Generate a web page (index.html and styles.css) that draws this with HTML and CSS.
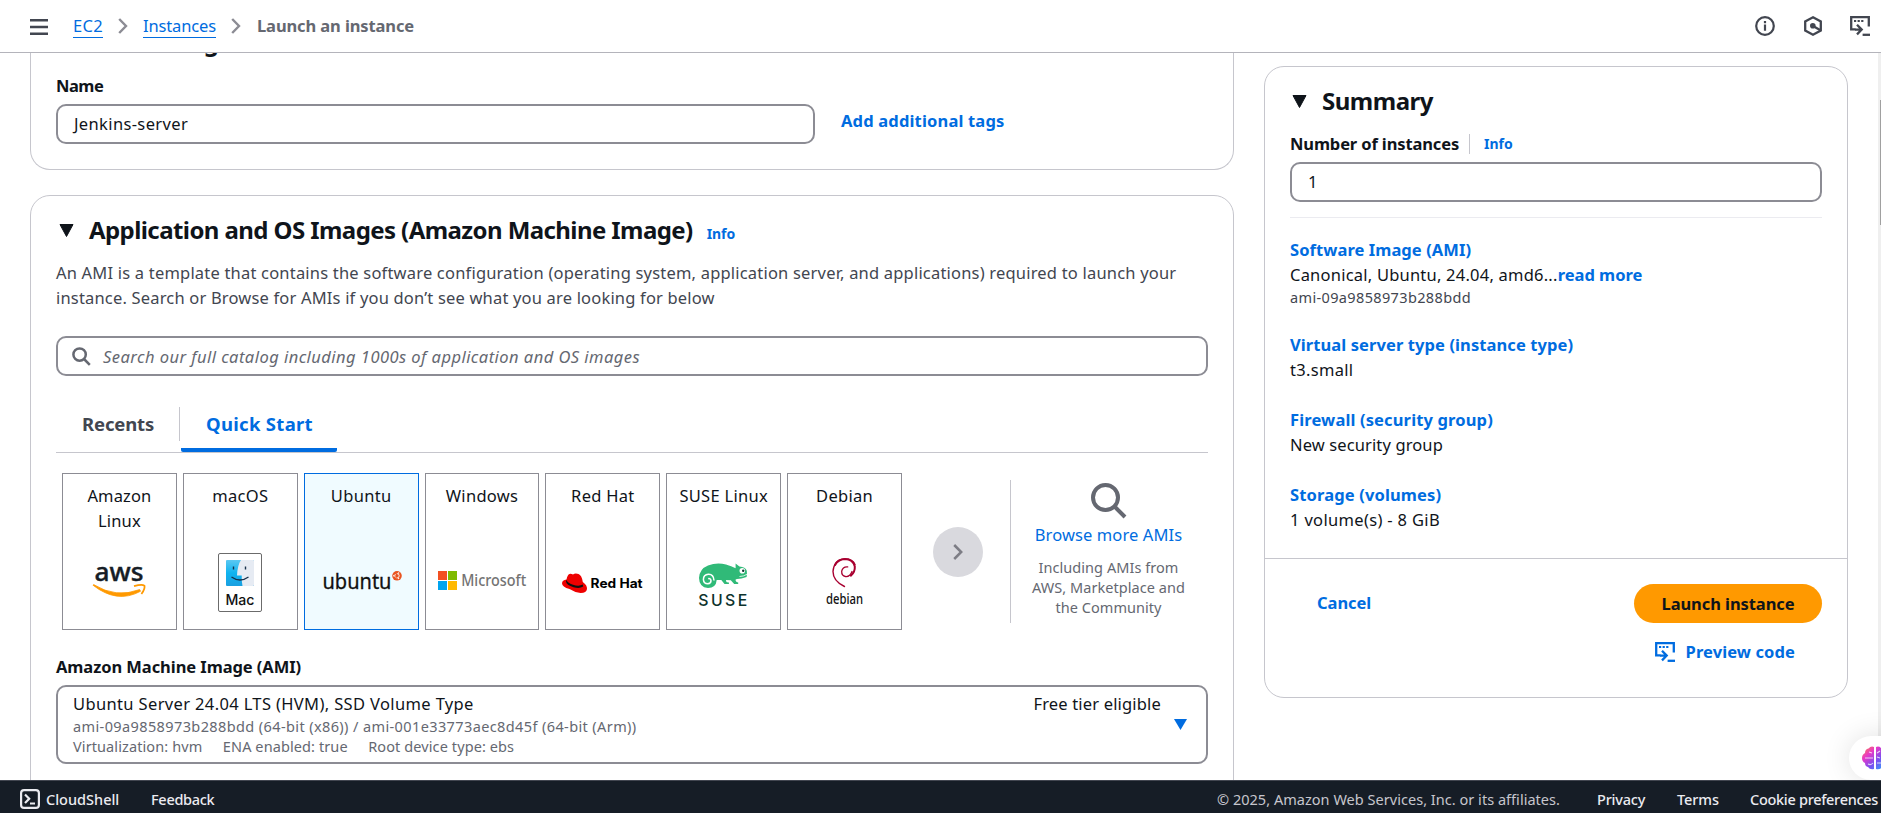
FILE: index.html
```html
<!DOCTYPE html>
<html lang="en">
<head>
<meta charset="utf-8">
<title>Launch an instance | EC2</title>
<link rel="stylesheet" href="styles.css">
</head>
<body>
<header class="topbar">
  <svg class="menu" width="18" height="16" viewBox="0 0 18 16"><path d="M0 1.2h18M0 8h18M0 14.8h18" stroke="#424650" stroke-width="2.4"/></svg>
  <nav class="crumbs">
    <a class="crumb ec2">EC2</a>
    <svg class="sep" width="10" height="16" viewBox="0 0 10 16"><path d="M1.2 1l6.8 7-6.8 7" fill="none" stroke="#8c8c94" stroke-width="2.4"/></svg>
    <a class="crumb inst">Instances</a>
    <svg class="sep" width="10" height="16" viewBox="0 0 10 16"><path d="M1.2 1l6.8 7-6.8 7" fill="none" stroke="#8c8c94" stroke-width="2.4"/></svg>
    <span class="current">Launch an instance</span>
  </nav>
  <div class="tools">
    <svg width="20" height="20" viewBox="0 0 20 20" fill="none" stroke="#424650" stroke-width="2.2"><circle cx="10" cy="10" r="8.8"/><path d="M10 8.6v6.2M10 5v2.2"/></svg>
    <svg width="20" height="20" viewBox="0 0 20 20" fill="none" stroke="#424650" stroke-width="2.3"><path d="M10 1.3l7.8 4.2v9L10 18.7l-7.8-4.2v-9z"/><circle cx="9.8" cy="9.8" r="2.8" fill="#424650" stroke="none"/><path d="M10 10l7 4"/></svg>
    <svg class="code-icon" width="20" height="20" viewBox="0 0 20 20" fill="none" stroke="#424650" stroke-width="2.3"><path d="M5.500 13.400H1.200V1.200h17.600v9.300"/><path d="M4 5h2.200M7.600 5h2.200M11.200 5h2.200" stroke-width="2"/><path d="M5 13.600h6M7 8.800l4.700 4.800L7 18.400"/><path d="M12.600 18.800H20"/></svg>
  </div>
</header>

<main class="page">
  <div class="left">
    <section class="card name-card">
      <h2 class="h2">Name and tags</h2>
      <div class="label name-label">Name</div>
      <div class="name-row">
        <div class="field name-field"><span class="jenkins">Jenkins-server</span></div>
        <a class="link-b add-tags">Add additional tags</a>
      </div>
    </section>

    <section class="card ami-card">
      <div class="head">
        <svg class="tri" width="15" height="13" viewBox="0 0 15 13"><path d="M1 .5h13L7.500 12.500z" fill="#0f141a" stroke="#0f141a" stroke-linejoin="round"/></svg>
        <h2 class="h2 app-title">Application and OS Images (Amazon Machine Image)</h2>
        <a class="info">Info</a>
      </div>
      <p class="desc"><span class="l1">An AMI is a template that contains the software configuration (operating system, application server, and applications) required to launch your</span><br><span class="l2">instance. Search or Browse for AMIs if you don’t see what you are looking for below</span></p>
      <div class="field search">
        <svg width="19" height="19" viewBox="0 0 19 19" fill="none" stroke="#656871" stroke-width="2.5"><circle cx="7.600" cy="7.600" r="6.200"/><path d="M12 12l5.800 5.800"/></svg>
        <em>Search our full catalog including 1000s of application and OS images</em>
      </div>
      <div class="tabs">
        <div class="tab recents">Recents</div>
        <div class="tab-div"></div>
        <div class="tab quick">Quick Start</div>
      </div>
      <div class="carousel">
        <div class="tiles">
          <div class="tile"><span class="t-amz">Amazon<br>Linux</span>
            <svg class="logo" viewBox="0 0 113 70"><text x="31.500" y="32.500" font-size="25" font-weight="500" textLength="49" lengthAdjust="spacingAndGlyphs" fill="#161d26" stroke="#161d26" stroke-width=".4">aws</text><path d="M30 37.200Q54 56 77.500 43.300l-.8-1.700Q53 50.500 30.600 36.600z" fill="#ff9900" stroke="#ff9900" stroke-width=".8"/><path d="M71 38.200q8-2.400 10.400-.6 1 3.400-3 8.400" fill="none" stroke="#ff9900" stroke-width="1.800"/></svg></div>
          <div class="tile"><span class="t-n">macOS</span>
            <svg class="logo" viewBox="0 0 113 70"><defs><linearGradient id="mb" x1="0" y1="0" x2="0" y2="1"><stop offset="0" stop-color="#5cc8f2"/><stop offset=".5" stop-color="#0fb4f0"/><stop offset="1" stop-color="#1a9fe0"/></linearGradient></defs><rect x="34.500" y="5.500" width="43" height="58" rx="1.500" fill="#fff" stroke="#6b6b6b"/><rect x="42" y="12" width="28" height="26" rx="1" fill="url(#mb)"/><path d="M57 12h12q1 0 1 1v24q0 1-1 1H58.500q-1-5-.8-10.500H53Q53.500 17 57 12z" fill="#e6ebf3"/><path d="M47.500 29q8.500 6 17 0" fill="none" stroke="#17304a" stroke-width="1.300"/><path d="M49.500 18.500v3M61.500 18.500v3" stroke="#17304a" stroke-width="1.400"/><text x="41.500" y="56.500" font-size="14.500" font-weight="500" font-family="Inter" textLength="29" lengthAdjust="spacingAndGlyphs" fill="#111">Mac</text></svg></div>
          <div class="tile selected"><span class="t-n">Ubuntu</span>
            <svg class="logo" viewBox="0 0 113 70"><text x="17.500" y="41" font-size="22.500" textLength="69" lengthAdjust="spacingAndGlyphs" fill="#111" stroke="#111" stroke-width=".3">ubuntu</text><circle cx="92" cy="27.800" r="4.800" fill="#e95420"/><circle cx="92" cy="27.800" r="2.200" fill="none" stroke="#fff" stroke-width=".9" stroke-dasharray="3.600 1"/><g fill="#fff"><circle cx="88.800" cy="27.800" r=".7"/><circle cx="93.600" cy="25" r=".7"/><circle cx="93.600" cy="30.600" r=".7"/></g></svg></div>
          <div class="tile"><span class="t-n">Windows</span>
            <svg class="logo" viewBox="0 0 113 70"><path fill="#f25022" d="M12 23h9v9h-9z"/><path fill="#7fba00" d="M22 23h9v9h-9z"/><path fill="#00a4ef" d="M12 33h9v9h-9z"/><path fill="#ffb900" d="M22 33h9v9h-9z"/><text x="35.200" y="38" font-size="15.500" font-weight="500" textLength="65" lengthAdjust="spacingAndGlyphs" fill="#737373">Microsoft</text></svg></div>
          <div class="tile"><span class="t-n">Red Hat</span>
            <svg class="logo" viewBox="0 0 113 70"><path d="M20.500 31.500q1-5 3-5.500 1.500-.6 3.500.6Q29 24.800 32.500 26q3.200 1 4.300 8 4.500 3.200 4.200 7-.6 4-6.500 3.900-5.500-.3-11-3.900-7.500-2-7.500-5.800.2-3 4.500-3.700z" fill="#e00"/><path d="M20.500 31.700q.6 3 6.500 5t9.800-.2l.4 2q-3.500 2.400-9.600.7-7.300-2-7.600-5.700z" fill="#111"/><text x="44.600" y="40" font-size="12.800" font-weight="700" font-family="Inter" textLength="52" lengthAdjust="spacingAndGlyphs" fill="#000">Red Hat</text></svg></div>
          <div class="tile"><span class="t-n">SUSE Linux</span>
            <svg class="logo" viewBox="0 0 113 70"><path d="M32 30Q32.500 21 41 17.600q9-3.600 18-1Q64.500 18 68.600 20.300V15.600l3.800 2.800q6 .3 7.400 4.300.4 3-.2 6.200-5.500 2-9.600 2-2 .3-1.400 1.700.6 1.800 2.600 1.900v1.500h-4l-3.400-3.800-4.600-.2q-.8.900.7 2.300l2 .3v1.400h-4.400l-3.200-4h-4.600Q49 40 41 40q-8.800-.6-9-10z" fill="#30ba78"/><path d="M47 32.500q-.4-6.400-5.600-6.200-5 .5-5 5.200.3 4.200 4.400 4.300 3.300-.2 3.200-3.200-.5-2.500-2.800-1.900" fill="none" stroke="#fff" stroke-width="1.500"/><circle cx="75.300" cy="22.800" r="2.800" fill="#fff"/><circle cx="76.200" cy="22.800" r="1.200" fill="#0c322c"/><path d="M72.500 28.500q4 0 7.500-2.200" fill="none" stroke="#fff" stroke-width=".8"/><text x="31.300" y="57.700" font-size="15.800" font-weight="500" font-family="Inter" textLength="49" fill="#0c322c">SUSE</text></svg></div>
          <div class="tile"><span class="t-n">Debian</span>
            <svg class="logo" viewBox="0 0 113 70"><g fill="none" stroke="#a80030" stroke-linecap="round"><path d="M56.500 38.500Q45 33 45 23.500 46 12 56 11q8.500-.3 11 5.500" stroke-width="1.400"/><path d="M47 17Q50.500 11 57 11q8 .2 9.800 7.500.4 5.500-4 9.200" stroke-width="2"/><path d="M64 23.500q-2 5.500-6.500 5-4-.8-3.800-5.300 1-4.700 6-4.300" stroke-width="1.300"/></g><text x="38" y="56" font-size="14.500" font-weight="500" textLength="37" lengthAdjust="spacingAndGlyphs" fill="#111">debian</text></svg></div>
        </div>
        <div class="next"><svg width="10" height="16" viewBox="0 0 10 16"><path d="M1.200 1l7 7-7 7" fill="none" stroke="#7d7d85" stroke-width="2.500"/></svg></div>
        <div class="browse">
          <svg width="36" height="36" viewBox="0 0 36 36" fill="none" stroke="#656871" stroke-width="4"><circle cx="14.500" cy="14.500" r="12.500"/><path d="M23.500 23.500L34 34"/></svg>
          <a class="browse-link">Browse more AMIs</a>
          <div class="browse-txt">Including AMIs from<br>AWS, Marketplace and<br>the Community</div>
        </div>
      </div>
      <div class="label ami-label">Amazon Machine Image (AMI)</div>
      <div class="select">
        <div class="sel-main">
          <div class="sel-row"><span class="s1">Ubuntu Server 24.04 LTS (HVM), SSD Volume Type</span><span class="free">Free tier eligible</span></div>
          <div class="sel-sub s2">ami-09a9858973b288bdd (64-bit (x86)) / ami-001e33773aec8d45f (64-bit (Arm))</div>
          <div class="sel-sub s3"><span>Virtualization: hvm</span><span>ENA enabled: true</span><span>Root device type: ebs</span></div>
        </div>
        <svg width="13" height="11" viewBox="0 0 13 11"><path d="M0 0h13L6.500 11z" fill="#006ce0"/></svg>
      </div>
    </section>
  </div>

  <aside class="card summary">
    <div class="sum-body">
      <div class="head">
        <svg class="tri" width="15" height="13" viewBox="0 0 15 13"><path d="M1 .5h13L7.500 12.500z" fill="#0f141a" stroke="#0f141a" stroke-linejoin="round"/></svg>
        <h2 class="h2 sum-title">Summary</h2>
      </div>
      <div class="num-row"><span class="label num-label">Number of instances</span><a class="info num-info">Info</a></div>
      <div class="field num-field">1</div>
      <dl class="facts">
        <div class="fact"><dt class="f1">Software Image (AMI)</dt><dd><span class="canon">Canonical, Ubuntu, 24.04, amd6...</span><a class="link-b more">read more</a></dd><dd class="id">ami-09a9858973b288bdd</dd></div>
        <div class="fact"><dt class="f2">Virtual server type (instance type)</dt><dd class="t3">t3.small</dd></div>
        <div class="fact"><dt class="f3">Firewall (security group)</dt><dd class="nsg">New security group</dd></div>
        <div class="fact"><dt class="f3">Storage (volumes)</dt><dd class="vol">1 volume(s) - 8 GiB</dd></div>
      </dl>
    </div>
    <div class="actions">
      <a class="link-b cancel">Cancel</a>
      <div class="act-right">
        <button class="launch">Launch instance</button>
        <a class="link-b preview"><svg width="20" height="20" viewBox="0 0 20 20" fill="none" stroke="#006ce0" stroke-width="2.300"><path d="M5.500 13.400H1.200V1.200h17.600v9.300"/><path d="M4 5h2.200M7.600 5h2.200M11.200 5h2.200" stroke-width="2"/><path d="M5 13.600h6M7 8.800l4.700 4.800L7 18.400"/><path d="M12.600 18.800H20"/></svg>Preview code</a>
      </div>
    </div>
  </aside>
  <div class="scroll"><div class="thumb"></div></div>
</main>

<footer class="foot">
  <svg width="20" height="20" viewBox="0 0 20 20" fill="none" stroke="#ebebf0" stroke-width="2.200"><rect x="1.100" y="1.100" width="17.800" height="17.800" rx="3"/><path d="M5 5.500l4.200 4.200L5 14M10 14.500h5"/></svg>
  <a class="shell">CloudShell</a>
  <a class="feedback">Feedback</a>
  <span class="copy">© 2025, Amazon Web Services, Inc. or its affiliates.</span>
  <a class="privacy">Privacy</a>
  <a class="terms">Terms</a>
  <a class="cookies">Cookie preferences</a>
</footer>
<div class="bubble"><svg width="26" height="24" viewBox="0 0 26 24"><defs><linearGradient id="br" x1="0" y1="0" x2="1" y2="1"><stop offset="0" stop-color="#ff8a3c"/><stop offset=".3" stop-color="#e838c8"/><stop offset=".6" stop-color="#7a4ff0"/><stop offset="1" stop-color="#20b8ff"/></linearGradient></defs><path d="M12 1v22q-4 1-6-2-3-.5-3-4-3-1.500-3-5t3-5q0-4 3.500-4.500Q9-.5 12 1zM14 1v22q4 1 6-2 3-.5 3-4 3-1.500 3-5t-3-5q0-4-3.500-4.500Q17-.5 14 1z" fill="url(#br)"/><path d="M3 12h8M6 18q3 1.500 5-1M7 6l3 1M15 7l3-2M15 11l3 1M15 17h4" stroke="#fff" stroke-opacity=".75" stroke-width="1.100" fill="none"/></svg></div>
</body>
</html>
```
FILE: styles.css
```css
* { box-sizing: border-box; }
body {
  margin: 0; width: 1881px; height: 813px; overflow: hidden;
  display: flex; flex-direction: column; background: #fff; color: #0f141a;
  font: 400 16.5px/25px "Noto Sans", "Open Sans", sans-serif; white-space: nowrap;
}
svg { flex: none; display: block; }
h2, p, dl, dt, dd { margin: 0; }

.topbar { height: 53px; flex: none; border-bottom: 1px solid #b4b4bb; display: flex; align-items: center; padding: 0 11px 0 30px; }
.menu { margin-top: 1px; }
.crumbs { display: flex; align-items: center; margin-left: 25px; }
.crumb { color: #006ce0; line-height: 22px; border-bottom: 1px solid #006ce0; margin-top: 1px; }
.ec2 { letter-spacing: .32px; width: 30px; }
.inst { letter-spacing: -.14px; width: 73px; }
.sep { margin: 0 15px; }
.current { color: #656871; font-weight: 700; letter-spacing: -.11px; margin-left: 1px; margin-top: -1px; }
.tools { margin-left: auto; display: flex; gap: 28px; }
.code-icon { margin-left: -1px; }

.page { flex: 1; min-height: 0; display: flex; align-items: flex-start; padding-left: 30px; overflow: hidden; }
.card { border: 1px solid #c6c6cd; border-radius: 20px; }
.left { width: 1204px; flex: none; }
.h2 { font-size: 24px; line-height: 30px; font-weight: 700; letter-spacing: -.58px; }
.label { font-weight: 700; }
.field { height: 40px; border: 2px solid #8c8c94; border-radius: 10px; display: flex; align-items: center; padding: 0 16px 1px; }
.link-b { color: #006ce0; font-weight: 700; letter-spacing: .05px; }
.info { color: #006ce0; font-size: 14px; font-weight: 700; letter-spacing: -.05px; line-height: 20px; }

.name-card { display: flow-root; height: 117px; border-top: 0; border-radius: 0 0 20px 20px; padding: 0 25px; }
.name-card .h2 { margin-top: -26px; }
.name-label { margin-top: 16px; letter-spacing: -.5px; }
.name-row { display: flex; margin-top: 6px; align-items: flex-start; }
.name-field { width: 759px; }
.jenkins { letter-spacing: .36px; }
.add-tags { margin: 4px 0 0 26px; letter-spacing: .17px; }

.ami-card { margin-top: 25px; height: 700px; padding: 19px 25px 0; }
.head { display: flex; align-items: center; height: 30px; }
.tri { margin: 0 15px 0 3px; }
.ami-card .info { margin: 7px 0 0 14px; }
.desc { margin-top: 15px; color: #424650; }
.l1 { letter-spacing: .195px; }
.l2 { letter-spacing: .18px; }
.search { margin-top: 26px; padding: 0 14px; gap: 12px; color: #656871; }
.search em { letter-spacing: .46px; }
.tabs { margin-top: 25px; height: 52px; border-bottom: 1px solid #c6c6cd; display: flex; }
.tab { font-size: 18.5px; font-weight: 700; color: #424650; padding: 10px 25px 0; }
.recents { width: 123px; padding-left: 26px; letter-spacing: -.15px; }
.tab-div { width: 1px; height: 34px; margin-top: 6px; background: #c6c6cd; }
.quick { width: 156px; margin-left: 1px; color: #006ce0; letter-spacing: .3px; border-bottom: 4px solid #006ce0; border-radius: 2px; }

.carousel { margin-top: 20px; height: 157px; display: flex; align-items: center; padding-left: 6px; }
.tiles { width: 840px; height: 157px; display: grid; grid-template-columns: repeat(7, minmax(0, 1fr)); gap: 6px; }
.tile { border: 1px solid #8c8c94; padding: 9px 0 11px; display: flex; flex-direction: column; justify-content: space-between; align-items: center; text-align: center; }
.selected { background: #f0fbff; border-color: #006ce0; }
.logo { width: 113px; height: 70px; font-family: "Noto Sans", sans-serif; }
.t-amz { letter-spacing: .14px; }
.t-n { letter-spacing: .3px; }
.next { width: 50px; height: 50px; border-radius: 50%; background: #d9d9de; margin: 0 27px 0 31px; display: flex; align-items: center; justify-content: center; }
.browse { flex: 1; height: 143px; border-left: 1px solid #c6c6cd; display: flex; flex-direction: column; align-items: center; padding: 3px 2px 0 0; text-align: center; }
.browse-link { color: #006ce0; margin-top: 3px; letter-spacing: .1px; }
.browse-txt { margin-top: 10px; font-size: 14.5px; line-height: 20px; color: #656871; letter-spacing: .05px; }
.ami-label { margin-top: 24px; letter-spacing: -.07px; }
.select { margin-top: 6px; height: 79px; border: 2px solid #8c8c94; border-radius: 10px; display: flex; align-items: center; padding: 0 19px 0 15px; }
.sel-main { flex: 1; margin-right: 13px; padding-bottom: 3px; }
.sel-row { display: flex; justify-content: space-between; }
.s1 { letter-spacing: .36px; }
.free { letter-spacing: .17px; }
.sel-sub { font-size: 14.5px; line-height: 20px; color: #656871; }
.s2 { letter-spacing: .39px; }
.s3 { display: flex; gap: 20.5px; letter-spacing: .1px; }

.summary { width: 584px; height: 632px; margin: 13px 0 0 30px; flex: none; }
.sum-body { padding: 19px 25px 0; height: 492px; border-bottom: 1px solid #c6c6cd; }
.sum-body .tri { margin-left: 2px; }
.sum-title { letter-spacing: -.49px; }
.num-row { margin-top: 15px; display: flex; align-items: center; }
.num-label { letter-spacing: -.13px; }
.num-info { line-height: 20px; border-left: 1px solid #c6c6cd; margin-left: 10px; padding-left: 14px; }
.num-field { margin-top: 6px; }
.facts { margin-top: 15px; border-top: 1px solid #ebebf0; padding-top: 19px; display: flex; flex-direction: column; gap: 25px; }
.facts dt { color: #006ce0; font-weight: 700; }
.f1 { letter-spacing: .07px; }
.f2 { letter-spacing: .09px; }
.f3 { letter-spacing: .14px; }
.canon { letter-spacing: .22px; }
.more { letter-spacing: 0; }
.t3 { letter-spacing: .3px; }
.facts .id { font-size: 14.5px; line-height: 20px; color: #424650; letter-spacing: .36px; }
.nsg { letter-spacing: .12px; }
.vol { letter-spacing: .33px; }
.actions { display: flex; justify-content: space-between; padding: 25px 25px 0 52px; }
.cancel { margin-top: 6px; letter-spacing: -.05px; }
.act-right { display: flex; flex-direction: column; align-items: flex-end; }
.launch { width: 188px; height: 39px; border: 0; border-radius: 20px; background: #ff9900; color: #0f141a; font: inherit; font-weight: 700; letter-spacing: -.08px; padding: 0 0 1px; }
.preview { margin: 16px 27px 0 0; display: flex; align-items: center; gap: 11px; letter-spacing: .1px; }

.scroll { width: 3px; height: 727px; margin-left: auto; background: #efefef; flex: none; padding-top: 47px; }
.thumb { width: 1px; height: 125px; margin-left: 2px; background: #a0a0a0; }

.foot { height: 33px; flex: none; background: #161d26; border-top: 1px solid #424650; display: flex; align-items: center; padding: 4px 0 0 20px; color: #ebebf0; font-size: 14.5px; font-weight: 500; line-height: 20px; }
.foot a, .foot span { flex: none; }
.shell { margin-left: 6px; width: 74px; letter-spacing: 0; }
.feedback { margin-left: 31px; letter-spacing: -.3px; }
.copy { margin-left: auto; width: 344px; color: #c6c6cd; font-weight: 400; letter-spacing: .03px; }
.privacy { width: 49px; margin-left: 36px; letter-spacing: -.2px; }
.terms { width: 42px; margin-left: 31px; letter-spacing: -.1px; }
.cookies { width: 131px; margin-left: 31px; letter-spacing: -.3px; }

.bubble { position: absolute; left: 1849px; top: 736px; width: 70px; height: 44px; border-radius: 22px; background: #fff; box-shadow: 0 0 28px rgba(0, 0, 0, .12); padding: 10px 0 0 13px; clip-path: inset(-80px 38px 0 -80px); }
```
